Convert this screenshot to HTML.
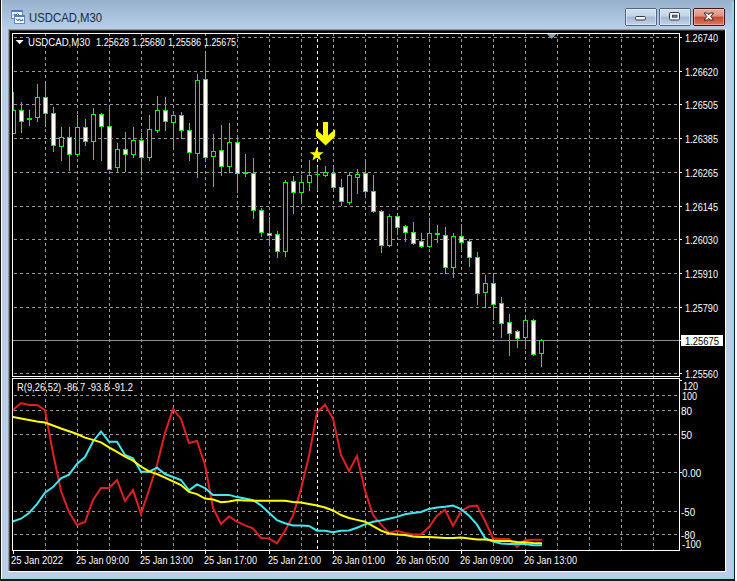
<!DOCTYPE html>
<html><head><meta charset="utf-8"><style>
html,body{margin:0;padding:0;width:737px;height:581px;overflow:hidden;background:#000}
svg{display:block}
text{font-family:"Liberation Sans",sans-serif}
</style></head><body>
<svg width="737" height="581" viewBox="0 0 737 581" shape-rendering="crispEdges">
<defs><linearGradient id="tg" x1="0" y1="0" x2="0" y2="1"><stop offset="0" stop-color="#97b1cd"/><stop offset="1" stop-color="#b8d0ea"/></linearGradient><linearGradient id="bg" x1="0" y1="0" x2="0" y2="1"><stop offset="0" stop-color="#d4e2f2"/><stop offset="0.45" stop-color="#c4d4e8"/><stop offset="0.5" stop-color="#a4b8d2"/><stop offset="1" stop-color="#c2d6ee"/></linearGradient><linearGradient id="cg" x1="0" y1="0" x2="0" y2="1"><stop offset="0" stop-color="#eeb2a2"/><stop offset="0.45" stop-color="#dc9282"/><stop offset="0.5" stop-color="#c24a30"/><stop offset="1" stop-color="#da7c62"/></linearGradient></defs><rect x="0" y="0" width="737" height="581" fill="#b9cfe6"/><rect x="2" y="0" width="733" height="30" fill="url(#tg)"/><rect x="0" y="0" width="1" height="581" fill="#101010"/><rect x="1" y="0" width="1" height="581" fill="#ffffff"/><rect x="734" y="0" width="1" height="581" fill="#102030"/><rect x="735" y="0" width="2" height="581" fill="#ffffff"/><rect x="732" y="2" width="2" height="577" fill="#98d4ee"/><rect x="2" y="578" width="732" height="1" fill="#90d8f0"/><rect x="0" y="579" width="735" height="2" fill="#101820"/><rect x="8" y="28" width="718" height="1" fill="#c4cedb"/><rect x="8" y="29" width="717" height="1" fill="#8a939e"/><rect x="9" y="30" width="716" height="1" fill="#34383e"/><rect x="8" y="29" width="1" height="542" fill="#8e9aa8"/><rect x="9" y="30" width="1" height="541" fill="#40464e"/><rect x="725" y="29" width="1" height="543" fill="#ffffff"/><rect x="8" y="571" width="718" height="1" fill="#ffffff"/><rect x="625.5" y="8.5" width="31" height="17" rx="2" fill="url(#bg)" stroke="#56667e"/><rect x="626.5" y="9.5" width="29" height="15" rx="1" fill="none" stroke="#e4eef8" stroke-opacity="0.6"/><rect x="635.5" y="16.5" width="10" height="3.5" rx="1.2" fill="#f4f6f8" stroke="#2e3848" shape-rendering="geometricPrecision"/><rect x="659.5" y="8.5" width="31" height="17" rx="2" fill="url(#bg)" stroke="#56667e"/><rect x="660.5" y="9.5" width="29" height="15" rx="1" fill="none" stroke="#e4eef8" stroke-opacity="0.6"/><rect x="669.5" y="12.5" width="10" height="7.5" rx="1.2" fill="#f4f6f8" stroke="#2e3848" shape-rendering="geometricPrecision"/><rect x="672.5" y="15.2" width="4.5" height="2" fill="#7d8a9a" stroke="#2e3848" stroke-width="0.9" shape-rendering="geometricPrecision"/><rect x="693.5" y="8.5" width="31" height="17" rx="2" fill="url(#cg)" stroke="#42181c"/><rect x="694.5" y="9.5" width="29" height="15" rx="1" fill="none" stroke="#f8d0c4" stroke-opacity="0.5"/><polygon points="704,13 707.6,13 708.8,14.7 710,13 713.6,13 710.8,16.5 713.6,20 710,20 708.8,18.3 707.6,20 704,20 706.8,16.5" fill="#fff" stroke="#3a2424" stroke-width="1" stroke-linejoin="round" shape-rendering="geometricPrecision"/><rect x="11.5" y="10.5" width="11" height="8" fill="#f4faff" stroke="#5f86c4"/><rect x="12" y="10" width="10" height="2" fill="#4a7cc8"/><path d="M13 15.5L14.5 14L16 15L17.5 13.5L19 15" stroke="#3a5a90" stroke-width="1" fill="none" shape-rendering="geometricPrecision"/><rect x="14.5" y="15.5" width="10" height="8" fill="#f4faff" stroke="#5f86c4"/><rect x="15" y="15" width="9" height="2" fill="#4a7cc8"/><path d="M16 18.5L17.8 21L19.3 18.8L20.8 21.2L22.5 19.5L23 21" stroke="#3a5a90" stroke-width="1" fill="none" shape-rendering="geometricPrecision"/><text x="29.00" y="22.20" font-size="12.5" fill="#1c2844" textLength="73.09" lengthAdjust="spacingAndGlyphs">USDCAD,M30</text>
<rect x="10" y="31" width="715" height="540" fill="#000"/><defs><clipPath id="cm"><rect x="13" y="34" width="666" height="342"/></clipPath><clipPath id="ci"><rect x="13" y="379" width="666" height="171"/></clipPath></defs><path d="M14 37.5H679M14 71.5H679M14 104.5H679M14 138.5H679M14 172.5H679M14 206.5H679M14 239.5H679M14 273.5H679M14 307.5H679M14 340.5H679M14 373.5H679M45.5 33V376M77.5 33V376M109.5 33V376M141.5 33V376M173.5 33V376M205.5 33V376M237.5 33V376M269.5 33V376M301.5 33V376M333.5 33V376M365.5 33V376M397.5 33V376M429.5 33V376M461.5 33V376M493.5 33V376M525.5 33V376M557.5 33V376M589.5 33V376M621.5 33V376M653.5 33V376" stroke="#9a9a9a" stroke-width="1" stroke-dasharray="3 3" fill="none" clip-path="url(#cm)" id="gm"/><path d="M317.5 33V376M317.5 378V550" stroke="#ffffff" stroke-width="1" stroke-dasharray="3 3" fill="none"/><path d="M14 395.5H679M14 410.5H679M14 434.5H679M14 472.5H679M14 511.5H679M14 534.5H679M45.5 375V550M77.5 375V550M109.5 375V550M141.5 375V550M173.5 375V550M205.5 375V550M237.5 375V550M269.5 375V550M301.5 375V550M333.5 375V550M365.5 375V550M397.5 375V550M429.5 375V550M461.5 375V550M493.5 375V550M525.5 375V550M557.5 375V550M589.5 375V550M621.5 375V550M653.5 375V550" stroke="#9a9a9a" stroke-width="1" stroke-dasharray="3 3" fill="none"/><rect x="13" y="340" width="666" height="1" fill="#8a9096"/><g clip-path="url(#cm)"><path d="M13.5 92V110M21.5 102V110M21.5 122V133M29.5 110V118M29.5 120V126M37.5 84V97M37.5 118V122M45.5 82V97M45.5 114V127M53.5 107V113M53.5 146V152M61.5 127V137M61.5 147V161M69.5 127V137M69.5 155V171M77.5 115V127M77.5 155V157M85.5 119V127M85.5 142V146M93.5 108V114M93.5 142V160M101.5 113V114M101.5 127V161M109.5 105V126M117.5 143V149M117.5 168V172M125.5 132V149M125.5 155V172M133.5 127V140M133.5 155V158M141.5 133V140M141.5 158V175M149.5 115V129M149.5 158V161M157.5 96V110M157.5 131V133M165.5 97V110M165.5 122V131M173.5 111V115M173.5 123V149M181.5 112V115M181.5 131V139M189.5 123V130M189.5 153V161M197.5 74V80M197.5 154V178M205.5 51V79M205.5 158V162M213.5 134V151M213.5 157V187M221.5 125V150M221.5 167V176M229.5 123V142M229.5 167V173M237.5 135V142M237.5 174V193M245.5 154V172M245.5 174V177M253.5 158V173M253.5 211V219M261.5 208V210M261.5 233V237M269.5 217V233M269.5 236V246M277.5 231V234M277.5 252V258M285.5 180V182M285.5 252V257M293.5 176V181M293.5 193V214M301.5 175V182M301.5 193V204M309.5 160V175M309.5 183V191M317.5 167V174M317.5 175V191M325.5 166V172M325.5 176V177M333.5 166V173M333.5 188V192M341.5 179V187M341.5 202V206M349.5 172V175M349.5 203V205M357.5 169V174M357.5 178V194M365.5 160V173M365.5 192V198M373.5 175V191M373.5 212V213M381.5 210V211M381.5 246V253M389.5 214V216M389.5 246V247M397.5 228V235M405.5 225V226M405.5 233V242M413.5 222V232M413.5 244V245M421.5 233V241M421.5 247V248M429.5 218V233M429.5 247V248M437.5 225V233M437.5 235V243M445.5 227V235M445.5 268V274M453.5 233V236M453.5 268V278M461.5 224V236M461.5 243V252M469.5 239V241M469.5 258V267M477.5 252V257M477.5 294V305M485.5 275V283M485.5 293V308M493.5 274V283M493.5 305V320M501.5 297V303M501.5 324V338M509.5 314V322M509.5 334V356M517.5 330V331M517.5 339V348M525.5 316V320M525.5 338V349M533.5 319V320M533.5 355V356M541.5 339V340M541.5 354V367" stroke="#00ff00" stroke-width="1" fill="none"/><rect x="11" y="110" width="5" height="24" fill="#00ff00"/><rect x="19" y="110" width="5" height="12" fill="#00ff00"/><rect x="27" y="118" width="5" height="2" fill="#00ff00"/><rect x="35" y="97" width="5" height="21" fill="#00ff00"/><rect x="43" y="97" width="5" height="17" fill="#00ff00"/><rect x="51" y="113" width="5" height="33" fill="#00ff00"/><rect x="59" y="137" width="5" height="10" fill="#00ff00"/><rect x="67" y="137" width="5" height="18" fill="#00ff00"/><rect x="75" y="127" width="5" height="28" fill="#00ff00"/><rect x="83" y="127" width="5" height="15" fill="#00ff00"/><rect x="91" y="114" width="5" height="28" fill="#00ff00"/><rect x="99" y="114" width="5" height="13" fill="#00ff00"/><rect x="107" y="126" width="5" height="44" fill="#00ff00"/><rect x="115" y="149" width="5" height="19" fill="#00ff00"/><rect x="123" y="149" width="5" height="6" fill="#00ff00"/><rect x="131" y="140" width="5" height="15" fill="#00ff00"/><rect x="139" y="140" width="5" height="18" fill="#00ff00"/><rect x="147" y="129" width="5" height="29" fill="#00ff00"/><rect x="155" y="110" width="5" height="21" fill="#00ff00"/><rect x="163" y="110" width="5" height="12" fill="#00ff00"/><rect x="171" y="115" width="5" height="8" fill="#00ff00"/><rect x="179" y="115" width="5" height="16" fill="#00ff00"/><rect x="187" y="130" width="5" height="23" fill="#00ff00"/><rect x="195" y="80" width="5" height="74" fill="#00ff00"/><rect x="203" y="79" width="5" height="79" fill="#00ff00"/><rect x="211" y="151" width="5" height="6" fill="#00ff00"/><rect x="219" y="150" width="5" height="17" fill="#00ff00"/><rect x="227" y="142" width="5" height="25" fill="#00ff00"/><rect x="235" y="142" width="5" height="32" fill="#00ff00"/><rect x="243" y="172" width="5" height="2" fill="#00ff00"/><rect x="251" y="173" width="5" height="38" fill="#00ff00"/><rect x="259" y="210" width="5" height="23" fill="#00ff00"/><rect x="267" y="233" width="5" height="3" fill="#00ff00"/><rect x="275" y="234" width="5" height="18" fill="#00ff00"/><rect x="283" y="182" width="5" height="70" fill="#00ff00"/><rect x="291" y="181" width="5" height="12" fill="#00ff00"/><rect x="299" y="182" width="5" height="11" fill="#00ff00"/><rect x="307" y="175" width="5" height="8" fill="#00ff00"/><rect x="315" y="174" width="5" height="1" fill="#00ff00"/><rect x="323" y="172" width="5" height="4" fill="#00ff00"/><rect x="331" y="173" width="5" height="15" fill="#00ff00"/><rect x="339" y="187" width="5" height="15" fill="#00ff00"/><rect x="347" y="175" width="5" height="28" fill="#00ff00"/><rect x="355" y="174" width="5" height="4" fill="#00ff00"/><rect x="363" y="173" width="5" height="19" fill="#00ff00"/><rect x="371" y="191" width="5" height="21" fill="#00ff00"/><rect x="379" y="211" width="5" height="35" fill="#00ff00"/><rect x="387" y="216" width="5" height="30" fill="#00ff00"/><rect x="395" y="216" width="5" height="12" fill="#00ff00"/><rect x="403" y="226" width="5" height="7" fill="#00ff00"/><rect x="411" y="232" width="5" height="12" fill="#00ff00"/><rect x="419" y="241" width="5" height="6" fill="#00ff00"/><rect x="427" y="233" width="5" height="14" fill="#00ff00"/><rect x="435" y="233" width="5" height="2" fill="#00ff00"/><rect x="443" y="235" width="5" height="33" fill="#00ff00"/><rect x="451" y="236" width="5" height="32" fill="#00ff00"/><rect x="459" y="236" width="5" height="7" fill="#00ff00"/><rect x="467" y="241" width="5" height="17" fill="#00ff00"/><rect x="475" y="257" width="5" height="37" fill="#00ff00"/><rect x="483" y="283" width="5" height="10" fill="#00ff00"/><rect x="491" y="283" width="5" height="22" fill="#00ff00"/><rect x="499" y="303" width="5" height="21" fill="#00ff00"/><rect x="507" y="322" width="5" height="12" fill="#00ff00"/><rect x="515" y="331" width="5" height="8" fill="#00ff00"/><rect x="523" y="320" width="5" height="18" fill="#00ff00"/><rect x="531" y="320" width="5" height="35" fill="#00ff00"/><rect x="539" y="340" width="5" height="14" fill="#00ff00"/><rect x="12" y="111" width="3" height="22" fill="#000"/><rect x="20" y="111" width="3" height="10" fill="#ffffff"/><rect x="36" y="98" width="3" height="19" fill="#000"/><rect x="44" y="98" width="3" height="15" fill="#ffffff"/><rect x="52" y="114" width="3" height="31" fill="#ffffff"/><rect x="60" y="138" width="3" height="8" fill="#000"/><rect x="68" y="138" width="3" height="16" fill="#ffffff"/><rect x="76" y="128" width="3" height="26" fill="#000"/><rect x="84" y="128" width="3" height="13" fill="#ffffff"/><rect x="92" y="115" width="3" height="26" fill="#000"/><rect x="100" y="115" width="3" height="11" fill="#ffffff"/><rect x="108" y="127" width="3" height="42" fill="#ffffff"/><rect x="116" y="150" width="3" height="17" fill="#000"/><rect x="124" y="150" width="3" height="4" fill="#ffffff"/><rect x="132" y="141" width="3" height="13" fill="#000"/><rect x="140" y="141" width="3" height="16" fill="#ffffff"/><rect x="148" y="130" width="3" height="27" fill="#000"/><rect x="156" y="111" width="3" height="19" fill="#000"/><rect x="164" y="111" width="3" height="10" fill="#ffffff"/><rect x="172" y="116" width="3" height="6" fill="#000"/><rect x="180" y="116" width="3" height="14" fill="#ffffff"/><rect x="188" y="131" width="3" height="21" fill="#ffffff"/><rect x="196" y="81" width="3" height="72" fill="#000"/><rect x="204" y="80" width="3" height="77" fill="#ffffff"/><rect x="212" y="152" width="3" height="4" fill="#000"/><rect x="220" y="151" width="3" height="15" fill="#ffffff"/><rect x="228" y="143" width="3" height="23" fill="#000"/><rect x="236" y="143" width="3" height="30" fill="#ffffff"/><rect x="252" y="174" width="3" height="36" fill="#ffffff"/><rect x="260" y="211" width="3" height="21" fill="#ffffff"/><rect x="268" y="234" width="3" height="1" fill="#ffffff"/><rect x="276" y="235" width="3" height="16" fill="#ffffff"/><rect x="284" y="183" width="3" height="68" fill="#000"/><rect x="292" y="182" width="3" height="10" fill="#ffffff"/><rect x="300" y="183" width="3" height="9" fill="#000"/><rect x="308" y="176" width="3" height="6" fill="#000"/><rect x="324" y="173" width="3" height="2" fill="#000"/><rect x="332" y="174" width="3" height="13" fill="#ffffff"/><rect x="340" y="188" width="3" height="13" fill="#ffffff"/><rect x="348" y="176" width="3" height="26" fill="#000"/><rect x="356" y="175" width="3" height="2" fill="#000"/><rect x="364" y="174" width="3" height="17" fill="#ffffff"/><rect x="372" y="192" width="3" height="19" fill="#ffffff"/><rect x="380" y="212" width="3" height="33" fill="#ffffff"/><rect x="388" y="217" width="3" height="28" fill="#000"/><rect x="396" y="217" width="3" height="10" fill="#ffffff"/><rect x="404" y="227" width="3" height="5" fill="#ffffff"/><rect x="412" y="233" width="3" height="10" fill="#ffffff"/><rect x="420" y="242" width="3" height="4" fill="#ffffff"/><rect x="428" y="234" width="3" height="12" fill="#000"/><rect x="444" y="236" width="3" height="31" fill="#ffffff"/><rect x="452" y="237" width="3" height="30" fill="#000"/><rect x="460" y="237" width="3" height="5" fill="#ffffff"/><rect x="468" y="242" width="3" height="15" fill="#ffffff"/><rect x="476" y="258" width="3" height="35" fill="#ffffff"/><rect x="484" y="284" width="3" height="8" fill="#000"/><rect x="492" y="284" width="3" height="20" fill="#ffffff"/><rect x="500" y="304" width="3" height="19" fill="#ffffff"/><rect x="508" y="323" width="3" height="10" fill="#ffffff"/><rect x="516" y="332" width="3" height="6" fill="#ffffff"/><rect x="524" y="321" width="3" height="16" fill="#000"/><rect x="532" y="321" width="3" height="33" fill="#ffffff"/><rect x="540" y="341" width="3" height="12" fill="#000"/></g><path d="M12.5 33.5H679.5V376.5H12.5Z" stroke="#fff" stroke-width="1" fill="none"/><path d="M12.5 378.5H679.5V550.5H12.5Z" stroke="#fff" stroke-width="1" fill="none"/><polygon points="547,34 556.5,34 551.7,39" fill="#8a9aab" shape-rendering="geometricPrecision"/><path d="M679 37.5H682M679 71.5H682M679 104.5H682M679 138.5H682M679 172.5H682M679 206.5H682M679 239.5H682M679 273.5H682M679 307.5H682M679 340.5H682M679 373.5H682M679 380.5H682M679 472.5H682" stroke="#fff" stroke-width="1"/><path d="M13.5 551V554M77.5 551V554M141.5 551V554M205.5 551V554M269.5 551V554M333.5 551V554M397.5 551V554M461.5 551V554M525.5 551V554" stroke="#fff" stroke-width="1"/><g clip-path="url(#ci)"><polyline points="13,410 21,403 29,405 37,405 45,410 53,453 61,491 69,512 77,525 85,522 93,500 101,488 109,488 117,480 125,501 133,490 141,514 149,490 157,465 165,433 173,409 181,419 189,443 197,441 205,465 213,508 221,524 229,516.5 237,521.7 245,525.4 253,528.4 261,538 269,538.4 277,543.4 285,530.7 293,515.7 301,489 309,456 317,412.6 325,404.7 333,418.6 341,455 349,471 357,456 365,490.4 373,515 381,524.7 389,532.9 397,530.7 405,532.9 413,534.4 421,534.4 429,527 437,515.7 445,509.8 453,525.9 461,511.3 469,506.5 477,505.6 485,521 493,538.2 501,539 509,539 517,547 525,540.3 533,539.8 541,539.8" fill="none" stroke="#e02020" stroke-width="2" stroke-linejoin="miter" stroke-linecap="square" shape-rendering="geometricPrecision"/><polyline points="13,521.4 21,518.7 29,513 37,504.1 45,492.6 53,487.1 61,478.4 69,474.7 77,464 85,457 93,441.5 101,431.5 109,441.7 117,441.7 125,455 133,458.3 141,471.7 149,471.7 157,467.7 165,474 173,477 181,480 189,490.4 197,484.4 205,488.1 213,494.9 221,494.9 229,494.9 237,497.1 245,498.6 253,500.1 261,505.3 269,512.8 277,520.2 285,523.2 293,525.4 301,525.4 309,525.9 317,530.7 325,530.7 333,532.2 341,530.7 349,530.4 357,527.7 365,524.4 373,521.7 381,520.5 389,518.7 397,516.9 405,514.3 413,513.1 421,512 429,508.9 437,507.5 445,506.8 453,505.6 461,509 469,515.7 477,524.7 485,538.1 493,541.5 501,543.5 509,544 517,544 525,544 533,545.2 541,545.2" fill="none" stroke="#40e8f0" stroke-width="2" stroke-linejoin="miter" stroke-linecap="square" shape-rendering="geometricPrecision"/><polyline points="13,417 21,418.5 29,420 37,421.5 45,422.6 53,425.5 61,428.5 69,431.2 77,434 85,437.6 93,439.9 101,442.4 109,447.4 117,451.8 125,456.6 133,460.6 141,466.5 149,471.4 157,474 165,477.7 173,481.4 181,485.1 189,491.9 197,494.1 205,498.6 213,499.6 221,502.3 229,501.6 237,500.1 245,500.5 253,500.8 261,500.8 269,500.8 277,500.8 285,500.8 293,502 301,502.6 309,504.1 317,505.6 325,507.5 333,510.5 341,515 349,518 357,519.9 365,521.7 373,526.2 381,530.7 389,533.4 397,534.4 405,535.1 413,536.6 421,536.9 429,536.9 437,537.4 445,538.1 453,538.1 461,537.4 469,538.4 477,539.6 485,539.6 493,540.5 501,541 509,541 517,542 525,542.3 533,543 541,543.2" fill="none" stroke="#ffff00" stroke-width="2" stroke-linejoin="miter" stroke-linecap="square" shape-rendering="geometricPrecision"/></g><polygon points="323,122 328,122 328,135.4 335.1,129.3 335.1,136.2 325.6,145.5 315.9,136.2 315.9,129.3 323,135.4" fill="#ffff00" shape-rendering="geometricPrecision"/><polygon points="316.70,147.30 318.46,152.17 323.64,152.34 319.55,155.53 320.99,160.51 316.70,157.60 312.41,160.51 313.85,155.53 309.76,152.34 314.94,152.17" fill="#ffff00" shape-rendering="geometricPrecision"/><rect x="681" y="335" width="42" height="11" fill="#fff"/><rect x="29" y="36" width="208" height="9" fill="#000"/><g font-family="Liberation Sans, sans-serif"><path d="M15.6 40H23.6L19.6 44.2Z" fill="#fff" shape-rendering="geometricPrecision"/><text x="685.00" y="41.50" font-size="10" fill="#fff" textLength="33.03" lengthAdjust="spacingAndGlyphs">1.26740</text><text x="685.00" y="75.50" font-size="10" fill="#fff" textLength="33.03" lengthAdjust="spacingAndGlyphs">1.26620</text><text x="685.00" y="108.50" font-size="10" fill="#fff" textLength="33.03" lengthAdjust="spacingAndGlyphs">1.26505</text><text x="685.00" y="142.50" font-size="10" fill="#fff" textLength="33.03" lengthAdjust="spacingAndGlyphs">1.26385</text><text x="685.00" y="176.50" font-size="10" fill="#fff" textLength="33.03" lengthAdjust="spacingAndGlyphs">1.26265</text><text x="685.00" y="210.50" font-size="10" fill="#fff" textLength="33.03" lengthAdjust="spacingAndGlyphs">1.26145</text><text x="685.00" y="243.50" font-size="10" fill="#fff" textLength="33.03" lengthAdjust="spacingAndGlyphs">1.26030</text><text x="685.00" y="277.50" font-size="10" fill="#fff" textLength="33.03" lengthAdjust="spacingAndGlyphs">1.25910</text><text x="685.00" y="311.50" font-size="10" fill="#fff" textLength="33.03" lengthAdjust="spacingAndGlyphs">1.25790</text><text x="685.00" y="377.50" font-size="10" fill="#fff" textLength="33.03" lengthAdjust="spacingAndGlyphs">1.25560</text><text x="685.00" y="344.50" font-size="10" fill="#000" textLength="34.13" lengthAdjust="spacingAndGlyphs">1.25675</text><text x="683.00" y="389.50" font-size="10" fill="#fff" textLength="15.08" lengthAdjust="spacingAndGlyphs">120</text><text x="682.00" y="399.50" font-size="10" fill="#fff" textLength="15.08" lengthAdjust="spacingAndGlyphs">100</text><text x="681.00" y="414.50" font-size="10" fill="#fff" textLength="11.11" lengthAdjust="spacingAndGlyphs">80</text><text x="681.00" y="438.50" font-size="10" fill="#fff" textLength="11.11" lengthAdjust="spacingAndGlyphs">50</text><text x="682.00" y="476.50" font-size="10" fill="#fff" textLength="19.18" lengthAdjust="spacingAndGlyphs">0.00</text><text x="681.00" y="515.50" font-size="10" fill="#fff" textLength="14.08" lengthAdjust="spacingAndGlyphs">-50</text><text x="681.00" y="538.50" font-size="10" fill="#fff" textLength="14.08" lengthAdjust="spacingAndGlyphs">-80</text><text x="682.00" y="547.50" font-size="10" fill="#fff" textLength="19.06" lengthAdjust="spacingAndGlyphs">-100</text><text x="11.00" y="563.50" font-size="10" fill="#fff" textLength="52.08" lengthAdjust="spacingAndGlyphs">25 Jan 2022</text><text x="76.00" y="563.50" font-size="10" fill="#fff" textLength="53.02" lengthAdjust="spacingAndGlyphs">25 Jan 09:00</text><text x="140.00" y="563.50" font-size="10" fill="#fff" textLength="53.02" lengthAdjust="spacingAndGlyphs">25 Jan 13:00</text><text x="204.00" y="563.50" font-size="10" fill="#fff" textLength="53.02" lengthAdjust="spacingAndGlyphs">25 Jan 17:00</text><text x="268.00" y="563.50" font-size="10" fill="#fff" textLength="53.02" lengthAdjust="spacingAndGlyphs">25 Jan 21:00</text><text x="332.00" y="563.50" font-size="10" fill="#fff" textLength="53.02" lengthAdjust="spacingAndGlyphs">26 Jan 01:00</text><text x="396.00" y="563.50" font-size="10" fill="#fff" textLength="53.02" lengthAdjust="spacingAndGlyphs">26 Jan 05:00</text><text x="460.00" y="563.50" font-size="10" fill="#fff" textLength="53.02" lengthAdjust="spacingAndGlyphs">26 Jan 09:00</text><text x="524.00" y="563.50" font-size="10" fill="#fff" textLength="53.02" lengthAdjust="spacingAndGlyphs">26 Jan 13:00</text><text x="28.00" y="46.00" font-size="10" fill="#fff" textLength="62.02" lengthAdjust="spacingAndGlyphs">USDCAD,M30</text><text x="96.00" y="45.50" font-size="10" fill="#fff" textLength="33.10" lengthAdjust="spacingAndGlyphs">1.25628</text><text x="132.00" y="45.50" font-size="10" fill="#fff" textLength="33.10" lengthAdjust="spacingAndGlyphs">1.25680</text><text x="168.00" y="45.50" font-size="10" fill="#fff" textLength="33.10" lengthAdjust="spacingAndGlyphs">1.25586</text><text x="204.00" y="45.50" font-size="10" fill="#fff" textLength="32.03" lengthAdjust="spacingAndGlyphs">1.25675</text><text x="17.00" y="391.00" font-size="10" fill="#fff" textLength="116.03" lengthAdjust="spacingAndGlyphs">R(9,26,52) -86.7 -93.8 -91.2</text></g>
</svg>
</body></html>
